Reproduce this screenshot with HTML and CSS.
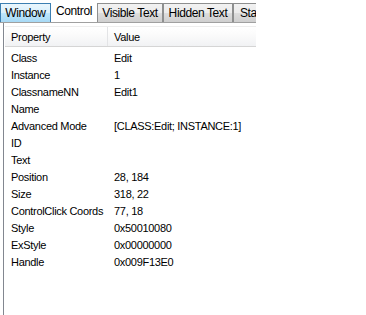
FILE: index.html
```html
<!DOCTYPE html>
<html>
<head>
<meta charset="utf-8">
<link rel="stylesheet" href="styles.css">
</head>
<body>
<div class="app">
  <div class="tabs">
    <div class="tab tab-hover tab-window">Window</div>
    <div class="tab tab-active tab-control">Control</div>
    <div class="tab tab-visible">Visible Text</div>
    <div class="tab tab-hidden">Hidden Text</div>
    <div class="tab tab-stat">Statusbar</div>
  </div>
  <div class="panel">
    <div class="list">
      <div class="header">
        <div class="hcell hcell-prop">Property</div>
        <div class="hcell hcell-val">Value</div>
      </div>
      <div class="rows">
        <div class="row"><span class="c1">Class</span><span class="c2">Edit</span></div>
        <div class="row"><span class="c1">Instance</span><span class="c2">1</span></div>
        <div class="row"><span class="c1">ClassnameNN</span><span class="c2">Edit1</span></div>
        <div class="row"><span class="c1">Name</span><span class="c2"></span></div>
        <div class="row"><span class="c1">Advanced Mode</span><span class="c2">[CLASS:Edit; INSTANCE:1]</span></div>
        <div class="row"><span class="c1">ID</span><span class="c2"></span></div>
        <div class="row"><span class="c1">Text</span><span class="c2"></span></div>
        <div class="row"><span class="c1">Position</span><span class="c2">28, 184</span></div>
        <div class="row"><span class="c1">Size</span><span class="c2">318, 22</span></div>
        <div class="row"><span class="c1">ControlClick Coords</span><span class="c2">77, 18</span></div>
        <div class="row"><span class="c1">Style</span><span class="c2">0x50010080</span></div>
        <div class="row"><span class="c1">ExStyle</span><span class="c2">0x00000000</span></div>
        <div class="row"><span class="c1">Handle</span><span class="c2">0x009F13E0</span></div>
      </div>
    </div>
  </div>
</div>
</body>
</html>
```

FILE: styles.css
```css
html, body {
  margin: 0;
  padding: 0;
  background: #ffffff;
}
body {
  width: 366px;
  height: 315px;
  overflow: hidden;
  font-family: "Liberation Sans", Arial, sans-serif;
  font-size: 11px;
  letter-spacing: -0.3px;
  color: #000000;
}
.app {
  width: 256px;
  height: 315px;
  display: flex;
  flex-direction: column;
  overflow: hidden;
}
.tabs {
  display: flex;
  align-items: flex-end;
  height: 22px;
  border-bottom: 1px solid #a0a0a0;
  overflow: hidden;
  flex: none;
}
.tab {
  box-sizing: border-box;
  height: 19px;
  border: 1px solid #8e8f8f;
  border-bottom: none;
  background: linear-gradient(#f2f2f2, #ebebeb 50%, #dddddd 51%, #cfcfcf);
  display: flex;
  align-items: center;
  justify-content: center;
  white-space: nowrap;
  flex: none;
  font-size: 12px;
  letter-spacing: -0.4px;
}
.tab-hover {
  background: linear-gradient(#eaf6fd, #d9f0fc 50%, #bee6fd 51%, #a7d9f5);
  border-color: #3c7fb1;
}
.tab-active {
  height: 22px;
  background: #ffffff;
  border: none;
}
.tab-window { width: 51px; }
.tab-control { width: 46px; }
.tab-visible { width: 66px; }
.tab-hidden { width: 70px; }
.tab-stat { width: 60px; justify-content: flex-start; padding-left: 6px; }
.panel {
  flex: 1;
  margin-left: 3px;
  border-left: 1px solid #828790;
  padding-top: 3px;
  padding-left: 1px;
}
.list {
  display: flex;
  flex-direction: column;
}
.header {
  display: flex;
  height: 21px;
  box-sizing: border-box;
  border-top: 1px solid #eeeeee;
  border-bottom: 1px solid #d5d5d5;
  background: linear-gradient(#ffffff, #fbfbfb 40%, #f1f2f4);
}
.hcell {
  display: flex;
  align-items: center;
  box-sizing: border-box;
}
.hcell-prop {
  width: 103px;
  padding-left: 6px;
  border-right: 1px solid #e3e4e6;
}
.hcell-val {
  flex: 1;
  padding-left: 6px;
}
.rows {
  padding-top: 2px;
  display: flex;
  flex-direction: column;
}
.row {
  display: flex;
  height: 17px;
  align-items: center;
  white-space: nowrap;
}
.c1 {
  width: 104px;
  padding-left: 6px;
  box-sizing: border-box;
  flex: none;
}
.c2 {
  padding-left: 5px;
}
```
